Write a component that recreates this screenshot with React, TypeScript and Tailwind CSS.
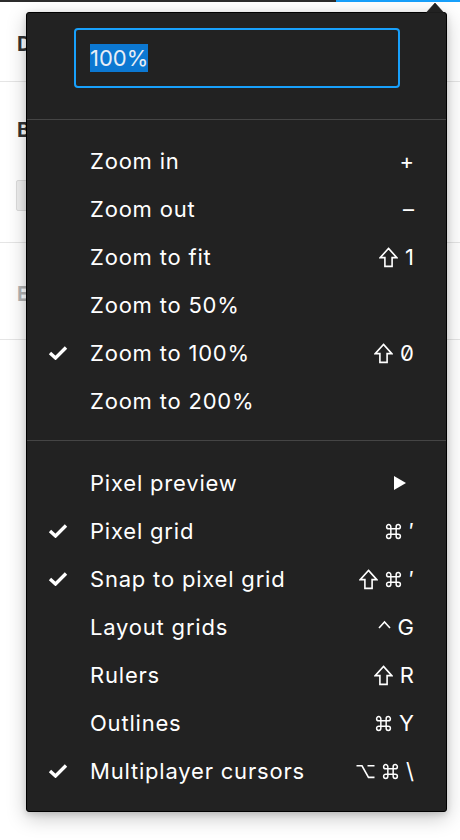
import React from 'react';

type Key = string;
type Item = { label: string; checked?: boolean; keys?: Key[]; submenu?: boolean };

const zoomItems: Item[] = [
  { label: 'Zoom in', keys: ['+'] },
  { label: 'Zoom out', keys: ['–'] },
  { label: 'Zoom to fit', keys: ['shift', '1'] },
  { label: 'Zoom to 50%' },
  { label: 'Zoom to 100%', checked: true, keys: ['shift', '0'] },
  { label: 'Zoom to 200%' },
];

const viewItems: Item[] = [
  { label: 'Pixel preview', submenu: true },
  { label: 'Pixel grid', checked: true, keys: ['cmd', '′'] },
  { label: 'Snap to pixel grid', checked: true, keys: ['shift', 'cmd', '′'] },
  { label: 'Layout grids', keys: ['ctrl', 'G'] },
  { label: 'Rulers', keys: ['shift', 'R'] },
  { label: 'Outlines', keys: ['cmd', 'Y'] },
  { label: 'Multiplayer cursors', checked: true, keys: ['opt', 'cmd', '\\'] },
];

function Check() {
  return (
    <svg width="20" height="14" viewBox="0 0 20 14">
      <path d="M2 7 L7.5 12 L18 1.5" fill="none" stroke="#fff" strokeWidth="3.4" />
    </svg>
  );
}

function KeyGlyph({ k }: { k: Key }) {
  if (k === 'shift')
    return (
      <svg width="19" height="21" viewBox="0 0 19 21">
        <path d="M9.5 1.4 L17.8 10.6 L13.1 10.6 L13.1 19.4 L5.9 19.4 L5.9 10.6 L1.2 10.6 Z" fill="none" stroke="#fff" strokeWidth="1.6" />
      </svg>
    );
  if (k === 'cmd')
    return (
      <svg width="17" height="17" viewBox="0 0 16 16">
        <path d="M5.5 5.5 V3.5 A2 2 0 1 0 3.5 5.5 H12.5 A2 2 0 1 0 10.5 3.5 V12.5 A2 2 0 1 0 12.5 10.5 H3.5 A2 2 0 1 0 5.5 12.5 Z" fill="none" stroke="#fff" strokeWidth="1.4" />
      </svg>
    );
  if (k === 'opt')
    return (
      <svg width="19" height="15" viewBox="0 0 19 15">
        <path d="M0.5 1.8 H6 L12.5 13.4 H18.5 M11.5 1.8 H18.5" fill="none" stroke="#fff" strokeWidth="1.6" />
      </svg>
    );
  if (k === 'ctrl')
    return (
      <svg width="13" height="16" viewBox="0 0 13 16">
        <path d="M1 9 L6.5 3 L12 9" fill="none" stroke="#fff" strokeWidth="1.6" />
      </svg>
    );
  if (k === '0') return <span className="slashed-zero">0</span>;
  return <span>{k}</span>;
}

function MenuRow({ item }: { item: Item }) {
  return (
    <div className="flex items-center h-12 pl-[21px] pr-[32px] text-white">
      <div className="w-[42px] flex items-center">{item.checked && <Check />}</div>
      <div className="flex-1 tracking-[0.8px]">{item.label}</div>
      {item.keys && (
        <div className="flex items-center gap-[7px] whitespace-nowrap">
          {item.keys.map((k, i) => (
            <KeyGlyph key={i} k={k} />
          ))}
        </div>
      )}
      {item.submenu && (
        <svg width="12" height="14" viewBox="0 0 12 14" className="mr-[8px]">
          <path d="M0 0 L12 7 L0 14 Z" fill="#fff" />
        </svg>
      )}
    </div>
  );
}

export default function App() {
  return (
    <div className="relative w-[460px] h-[840px] bg-white overflow-hidden" style={{ fontFamily: 'Inter, "Noto Sans", sans-serif' }}>
      <div className="flex h-[2px]">
        <div className="flex-1 bg-[#2c2c2c]" />
        <div className="w-[124px] bg-[#18a0fb]" />
      </div>

      {/* properties panel behind the menu */}
      <div className="text-[20px] leading-[30px] font-bold">
        <div className="h-[80px] border-b border-[#e5e5e5] pl-[17px] pt-[27px] text-[#333]">D</div>
        <div className="h-[161px] border-b border-[#e5e5e5] pl-[17px] pt-[33px] text-[#333]">
          <div>B</div>
          <div className="mt-[35px] w-[40px] h-[31px] ml-[-1px] rounded-[2px] border border-[#dcdcdc] bg-[#efefef]" />
        </div>
        <div className="h-[97px] border-b border-[#e5e5e5] pl-[17px] pt-[36px] text-[#b3b3b3]">E</div>
      </div>

      <div className="absolute left-[26px] top-[12px] w-[421px] h-[800px] bg-[#222] border border-black rounded-[3px] shadow-[0_6px_20px_rgba(0,0,0,0.22),0_2px_6px_rgba(0,0,0,0.15)] text-[22px] text-white">
        <svg width="18" height="11" viewBox="0 0 18 11" className="absolute left-[399px] top-[-11px]">
          <path d="M0 11 L9 1 L18 11 Z" fill="#222" stroke="#111" strokeWidth="0.6" />
        </svg>

        <div className="h-[107px] border-b border-[#454545] pt-[15px] pl-[47px]">
          <div className="w-[326px] h-[60px] rounded-[4px] border-2 border-[#18a0fb] flex items-center pl-[14px]">
            <span className="bg-[#0c78d2] text-[#e8eef6] leading-[28px]">100%</span>
          </div>
        </div>

        <div className="pt-[17px] pb-[15px] border-b border-[#454545]">
          {zoomItems.map((it) => (
            <MenuRow key={it.label} item={it} />
          ))}
        </div>

        <div className="pt-[18px]">
          {viewItems.map((it) => (
            <MenuRow key={it.label} item={it} />
          ))}
        </div>
      </div>
    </div>
  );
}
